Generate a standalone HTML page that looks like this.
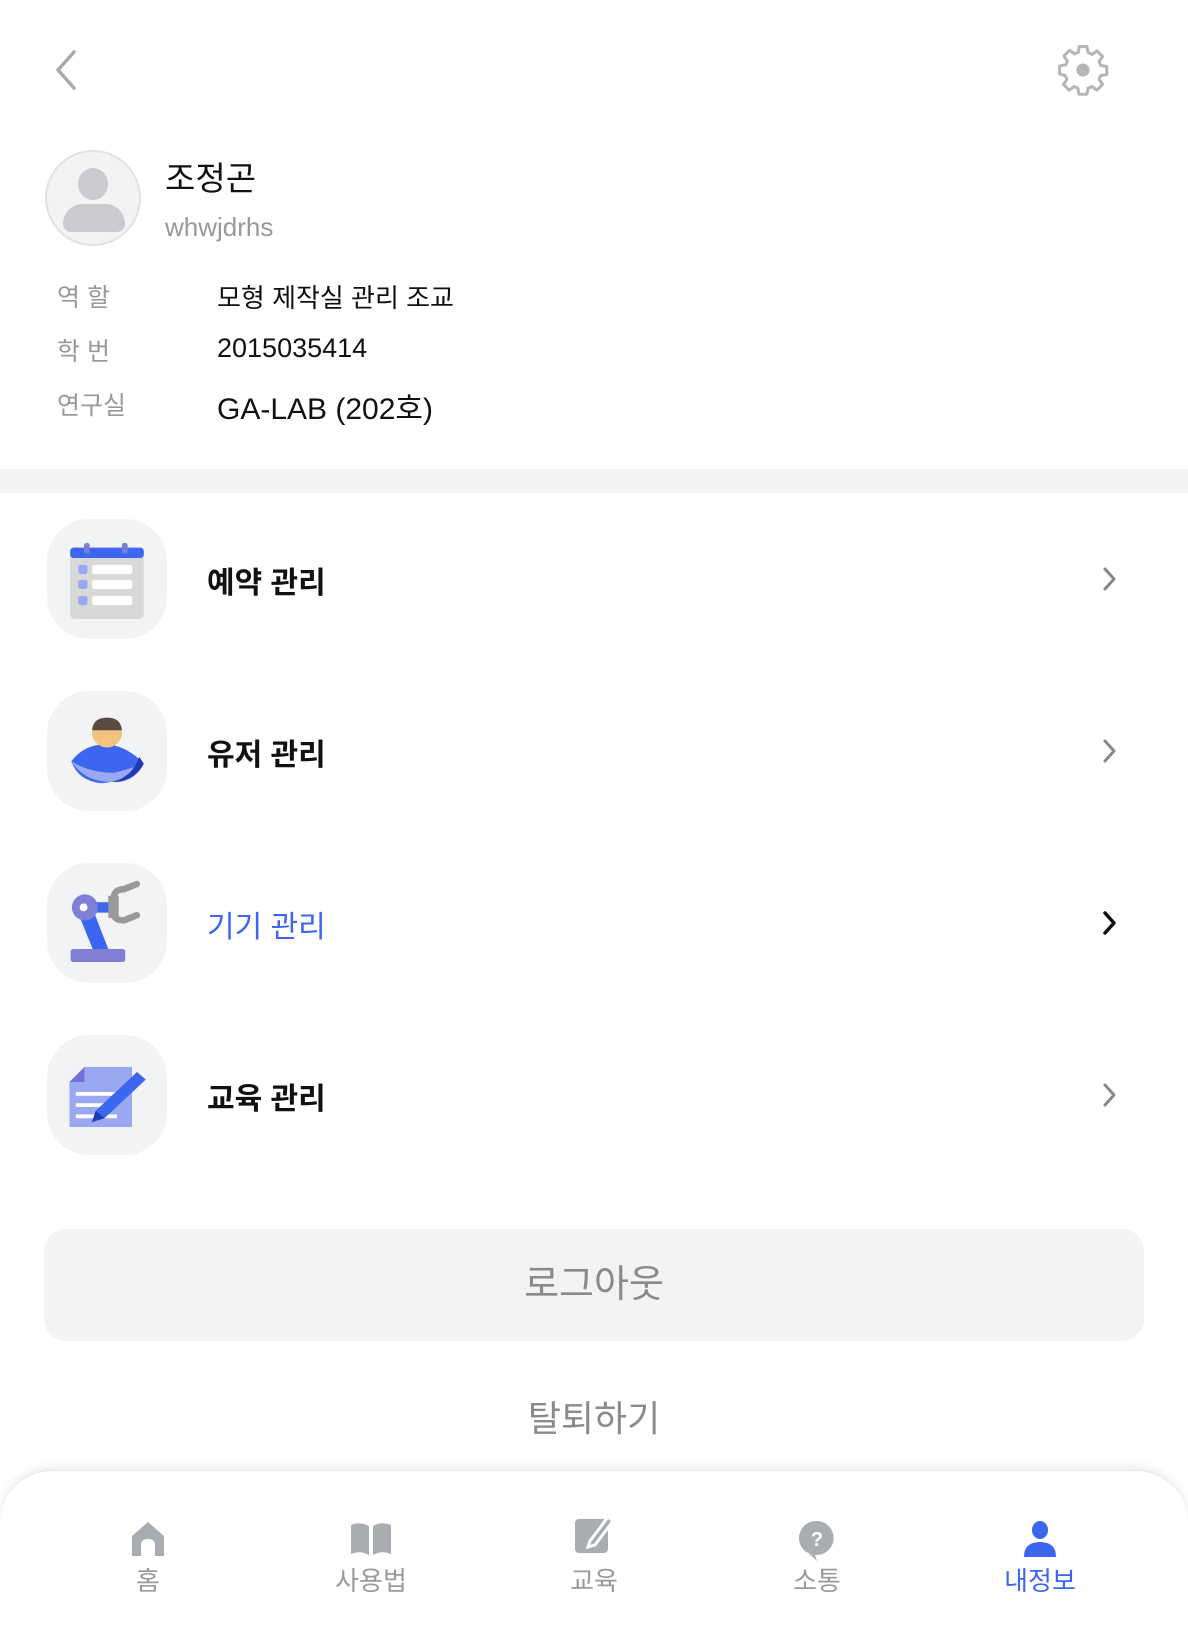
<!DOCTYPE html>
<html><head><meta charset="utf-8"><style>
*{margin:0;padding:0;box-sizing:border-box}
body{width:1188px;height:1650px;background:#fff;position:relative;overflow:hidden;font-family:"Liberation Sans","Noto Sans CJK KR",sans-serif;color:#111}
.a{position:absolute}
.lbl{position:absolute;left:57px;font-size:25px;color:#999}
.val{position:absolute;left:217px;font-size:27px;color:#111}
.ib{position:absolute;left:47px;width:120px;height:120px;border-radius:42px;background:#f2f3f5}
.mt{position:absolute;left:207px;font-size:30px;font-weight:bold;color:#111}
.ch{position:absolute;left:1100px}
.nav{position:absolute;top:1470px;left:0;width:1188px;height:180px;background:#fff;border-radius:52px 52px 0 0;box-shadow:0 -3px 10px rgba(0,0,0,0.08);border-top:1px solid #e6e6e6}
.ni{position:absolute;top:48px;width:120px;margin-left:-60px;text-align:center}
.nl{position:absolute;top:90px;width:120px;margin-left:-60px;text-align:center;font-size:26px;color:#9a9a9a}
</style></head><body>
<svg class="a" style="left:50px;top:48px" width="30" height="44" viewBox="0 0 30 44"><path d="M24 4 L8 22 L24 40" fill="none" stroke="#aaa" stroke-width="3.5" stroke-linecap="round" stroke-linejoin="round"/></svg>
<svg class="a" style="left:1055px;top:42px" width="56" height="56" viewBox="0 0 24 24"><path d="M10.3 2h3.4l.5 2.6 1.6.7 2.2-1.5 2.4 2.4-1.5 2.2.7 1.6 2.6.5v3.4l-2.6.5-.7 1.6 1.5 2.2-2.4 2.4-2.2-1.5-1.6.7-.5 2.6h-3.4l-.5-2.6-1.6-.7-2.2 1.5-2.4-2.4 1.5-2.2-.7-1.6L2 13.7v-3.4l2.6-.5.7-1.6-1.5-2.2 2.4-2.4 2.2 1.5 1.6-.7z" fill="none" stroke="#b5b5b5" stroke-width="1.3" stroke-linejoin="round"/><circle cx="12" cy="12" r="2.8" fill="#b5b5b5"/></svg>
<div class="a" style="left:45px;top:150px;width:96px;height:96px;border-radius:50%;background:#f3f3f4;border:2px solid #e2e2e2;overflow:hidden">
<div class="a" style="left:31px;top:16px;width:30px;height:32px;border-radius:50%;background:#c9cbcf"></div>
<div class="a" style="left:16px;top:52px;width:62px;height:28px;border-radius:24px 24px 10px 10px;background:#c9cbcf"></div></div>
<div class="a" style="left:165px;top:152px;font-size:33px">조정곤</div>
<div class="a" style="left:165px;top:212px;font-size:26px;color:#999">whwjdrhs</div>
<div class="lbl" style="top:278px">역 할</div><div class="val" style="top:278px;font-size:26px">모형 제작실 관리 조교</div>
<div class="lbl" style="top:332px">학 번</div><div class="val" style="top:333px">2015035414</div>
<div class="lbl" style="top:386px">연구실</div><div class="val" style="top:384px;font-size:30px">GA-LAB (202호)</div>
<div class="a" style="left:0;top:469px;width:1188px;height:24px;background:#f2f3f5"></div>

<div class="ib" style="top:519px"><svg width="120" height="120"><g transform="translate(60 62) scale(1.15) translate(-59 -62)"><rect x="27" y="33" width="64" height="62" rx="4" fill="#d8d8d8"/><rect x="27" y="33" width="64" height="9" rx="3" fill="#3d66f0"/><rect x="39" y="29" width="5" height="9" rx="2" fill="#7a7fd6"/><rect x="72" y="29" width="5" height="9" rx="2" fill="#7a7fd6"/><g fill="#9aa8f2"><rect x="34" y="48" width="8" height="8" rx="2"/><rect x="34" y="61" width="8" height="8" rx="2"/><rect x="34" y="75" width="8" height="8" rx="2"/></g><g fill="#fff"><rect x="46" y="48" width="35" height="8" rx="2"/><rect x="46" y="61" width="35" height="8" rx="2"/><rect x="46" y="75" width="35" height="8" rx="2"/></g></g></svg></div>
<div class="mt" style="top:558px">예약 관리</div>
<svg class="ch" style="top:565px" width="20" height="28" viewBox="0 0 20 28"><path d="M5 4 L14 14 L5 24" fill="none" stroke="#888" stroke-width="3" stroke-linecap="round" stroke-linejoin="round"/></svg>

<div class="ib" style="top:691px"><svg width="120" height="120"><g transform="translate(60 60) scale(1.15) translate(-60 -57)"><path d="M29 66 Q40 51 60 51 Q78 53 92 68 Q82 83 55 85 Q35 83 29 66Z" fill="#3d66f0"/><path d="M29 66 Q45 76 66 76 Q82 72 92 68 Q82 86 65 84 Q40 84 29 66Z" fill="#9aa8f2"/><path d="M92 68 Q84 84 64 84 Q82 80 88 62Z" fill="#1f3bb3"/><circle cx="60" cy="41" r="13" fill="#f2c27f"/><path d="M47 39 Q48 28 60 28 Q72 28 73 39Z" fill="#5a4a42"/></g></svg></div>
<div class="mt" style="top:730px">유저 관리</div>
<svg class="ch" style="top:737px" width="20" height="28" viewBox="0 0 20 28"><path d="M5 4 L14 14 L5 24" fill="none" stroke="#888" stroke-width="3" stroke-linecap="round" stroke-linejoin="round"/></svg>

<div class="ib" style="top:863px"><svg width="120" height="120"><g transform="translate(60 60) scale(1.3) translate(-57 -58)"><rect x="29" y="78" width="42" height="10" rx="2" fill="#7f7fd6"/><path d="M33 46 L44 42 L58 78 L46 78Z" fill="#3d66f0"/><rect x="44" y="42" width="18" height="8" fill="#3d66f0"/><circle cx="40" cy="46" r="10" fill="#7f7fd6"/><circle cx="39" cy="46" r="3" fill="#fff"/><path d="M62 40 Q62 32 70 32 L80 28 M62 50 Q62 56 70 56 L80 52" fill="none" stroke="#999" stroke-width="5" stroke-linecap="round"/><rect x="58" y="37" width="8" height="17" fill="#999"/></g></svg></div>
<div class="mt" style="top:902px;color:#3d66f0;font-weight:normal">기기 관리</div>
<svg class="ch" style="top:909px" width="20" height="28" viewBox="0 0 20 28"><path d="M5 4 L14 14 L5 24" fill="none" stroke="#111" stroke-width="3.5" stroke-linecap="round" stroke-linejoin="round"/></svg>

<div class="ib" style="top:1035px"><svg width="120" height="120"><g transform="translate(60 62) scale(1.25) translate(-57 -48)"><path d="M39 24 L77 24 L77 72 L27 72 L27 36Z" fill="#9aa8f2"/><path d="M27 36 L39 24 L39 36Z" fill="#7070d6"/><g fill="#fff"><rect x="32" y="44" width="33" height="3"/><rect x="32" y="53" width="33" height="3"/><rect x="32" y="62" width="33" height="3"/></g><path d="M48 59 L81 28 L88 34 L55 65 L45 68Z" fill="#3d66f0"/><path d="M48 59 L55 65 L45 68Z" fill="#1f3bb3"/></g></svg></div>
<div class="mt" style="top:1074px">교육 관리</div>
<svg class="ch" style="top:1081px" width="20" height="28" viewBox="0 0 20 28"><path d="M5 4 L14 14 L5 24" fill="none" stroke="#888" stroke-width="3" stroke-linecap="round" stroke-linejoin="round"/></svg>

<div class="a" style="left:44px;top:1229px;width:1100px;height:112px;border-radius:22px;background:#f2f3f5;text-align:center;line-height:112px;font-size:38px;color:#8a8a8a">로그아웃</div>
<div class="a" style="left:0;top:1390px;width:1188px;text-align:center;font-size:36px;color:#8a8a8a">탈퇴하기</div>

<div class="nav">
<div class="ni" style="left:148px"><svg width="40" height="40" viewBox="0 0 40 40"><path d="M4 17 L20 3 L36 17 L36 37 L27 37 L27 26 Q27 20 20 20 Q13 20 13 26 L13 37 L4 37Z" fill="#a9adb2"/></svg></div>
<div class="ni" style="left:371px"><svg width="46" height="40" viewBox="0 0 46 40"><path d="M3 6 Q12 2 21 7 L21 36 Q12 31 3 35Z M25 7 Q34 2 43 6 L43 35 Q34 31 25 36Z" fill="#a9adb2"/></svg></div>
<div class="ni" style="left:594px;top:40px"><svg width="44" height="46" viewBox="0 0 44 46"><rect x="3" y="8" width="33" height="34" rx="4" fill="#a9adb2"/><path d="M18 30 L36 6 L41 10 L23 34 L16 36Z" fill="#a9adb2" stroke="#fff" stroke-width="3"/></svg></div>
<div class="ni" style="left:817px"><svg width="40" height="44" viewBox="0 0 40 44"><path d="M20 2 A17 17 0 1 1 10 33 L20 42 L18 36 A17 17 0 0 1 20 2Z" fill="#a9adb2"/><text x="20" y="27" text-anchor="middle" font-size="20" font-weight="bold" fill="#fff" font-family="Liberation Sans">?</text></svg></div>
<div class="ni" style="left:1040px"><svg width="40" height="40" viewBox="0 0 40 40"><ellipse cx="20" cy="11" rx="8" ry="9" fill="#3d66f0"/><path d="M4 38 Q4 23 20 23 Q36 23 36 38Z" fill="#3d66f0"/></svg></div>
<div class="nl" style="left:148px">홈</div>
<div class="nl" style="left:371px">사용법</div>
<div class="nl" style="left:594px">교육</div>
<div class="nl" style="left:817px">소통</div>
<div class="nl" style="left:1040px;color:#3d66f0">내정보</div>
</div>
</body></html>
